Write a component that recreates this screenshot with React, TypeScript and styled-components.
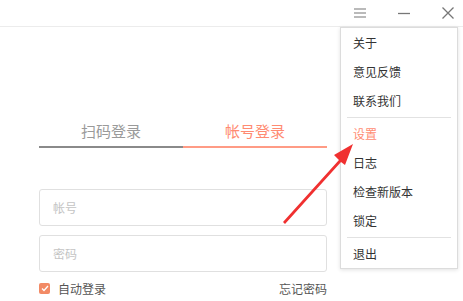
import styled, { createGlobalStyle } from 'styled-components';

const GlobalStyle = createGlobalStyle`
  html, body {
    margin: 0;
    padding: 0;
    background: #fff;
  }
  body {
    font-family: "Noto Sans CJK SC", "Noto Sans", sans-serif;
  }
`;

const Window = styled.div`
  position: relative;
  width: 463px;
  height: 301px;
  overflow: hidden;
  background: #fff;
`;

const TitleBar = styled.div`
  height: 27px;
  box-sizing: border-box;
  border-bottom: 1px solid #ececec;
  display: flex;
  justify-content: flex-end;
  align-items: center;
  gap: 14px;
`;

const TitleButton = styled.div`
  width: 30px;
  height: 24px;
  display: flex;
  align-items: center;
  justify-content: center;
`;

const Body = styled.div`
  padding: 92px 0 0 39px;
  width: 288px;
`;

const Tabs = styled.div`
  display: flex;
`;

const Tab = styled.div<{ active?: boolean }>`
  flex: 1;
  text-align: center;
  font-size: 15px;
  line-height: 20px;
  padding: 2px 0 5px;
  color: ${(p) => (p.active ? '#ff8b72' : '#9a9a9a')};
  border-bottom: 2px solid ${(p) => (p.active ? '#ff9b85' : '#8a8a8a')};
`;

const Form = styled.div`
  margin-top: 41px;
  display: flex;
  flex-direction: column;
  gap: 9px;
`;

const Input = styled.div`
  height: 37px;
  box-sizing: border-box;
  border: 1px solid #e0e0e0;
  border-radius: 3px;
  padding-left: 13px;
  display: flex;
  align-items: center;
  font-size: 12px;
  color: #c4c4c4;
`;

const Options = styled.div`
  margin-top: 8px;
  display: flex;
  justify-content: space-between;
  align-items: center;
  font-size: 12px;
  color: #555;
`;

const Remember = styled.div`
  display: flex;
  align-items: center;
  gap: 8px;
`;

const Check = styled.span`
  width: 11px;
  height: 11px;
  border-radius: 2px;
  background: #f28a65;
  display: inline-flex;
  align-items: center;
  justify-content: center;
`;

const Menu = styled.div`
  position: absolute;
  left: 340px;
  top: 27px;
  width: 118px;
  box-sizing: border-box;
  background: #fff;
  border: 1px solid #dcdcdc;
  box-shadow: 0 1px 4px rgba(0, 0, 0, 0.12);
`;

const MenuItem = styled.div<{ highlight?: boolean }>`
  height: 29px;
  display: flex;
  align-items: center;
  padding-left: 12px;
  font-size: 12px;
  color: ${(p) => (p.highlight ? '#ff8d73' : '#333')};
`;

const Divider = styled.div`
  height: 1px;
  background: #e2e2e2;
  margin: 2px 6px 1px;
`;

const Arrow = styled.svg`
  position: absolute;
  left: 0;
  top: 0;
  pointer-events: none;
`;

const topItems = ['关于', '意见反馈', '联系我们'];
const midItems = ['设置', '日志', '检查新版本', '锁定'];

export default function App() {
  return (
    <Window>
      <GlobalStyle />
      <TitleBar>
        <TitleButton>
          <svg width="14" height="12" viewBox="0 0 14 12">
            <path d="M1 2h12M1 6h12M1 10h12" stroke="#777" strokeWidth="1.2" />
          </svg>
        </TitleButton>
        <TitleButton>
          <svg width="14" height="12" viewBox="0 0 14 12">
            <path d="M1 6.5h12" stroke="#777" strokeWidth="1.3" />
          </svg>
        </TitleButton>
        <TitleButton>
          <svg width="14" height="14" viewBox="0 0 14 14">
            <path d="M1.5 1.5l11 11M12.5 1.5l-11 11" stroke="#777" strokeWidth="1.3" />
          </svg>
        </TitleButton>
      </TitleBar>
      <Body>
        <Tabs>
          <Tab>扫码登录</Tab>
          <Tab active>帐号登录</Tab>
        </Tabs>
        <Form>
          <Input>帐号</Input>
          <Input>密码</Input>
        </Form>
        <Options>
          <Remember>
            <Check>
              <svg width="8" height="7" viewBox="0 0 8 7">
                <path d="M1 3.5l2 2 4-4.5" stroke="#fff" strokeWidth="1.3" fill="none" />
              </svg>
            </Check>
            自动登录
          </Remember>
          <span>忘记密码</span>
        </Options>
      </Body>
      <Menu>
        {topItems.map((t) => (
          <MenuItem key={t}>{t}</MenuItem>
        ))}
        <Divider />
        {midItems.map((t) => (
          <MenuItem key={t} highlight={t === '设置'}>
            {t}
          </MenuItem>
        ))}
        <Divider />
        <MenuItem>退出</MenuItem>
      </Menu>
      <Arrow width="463" height="301" viewBox="0 0 463 301">
        <path d="M283 222 L339 160 L334 155 L353 144 L345 165 L341 162 L285 224 Z" fill="#f03030" />
      </Arrow>
    </Window>
  );
}
